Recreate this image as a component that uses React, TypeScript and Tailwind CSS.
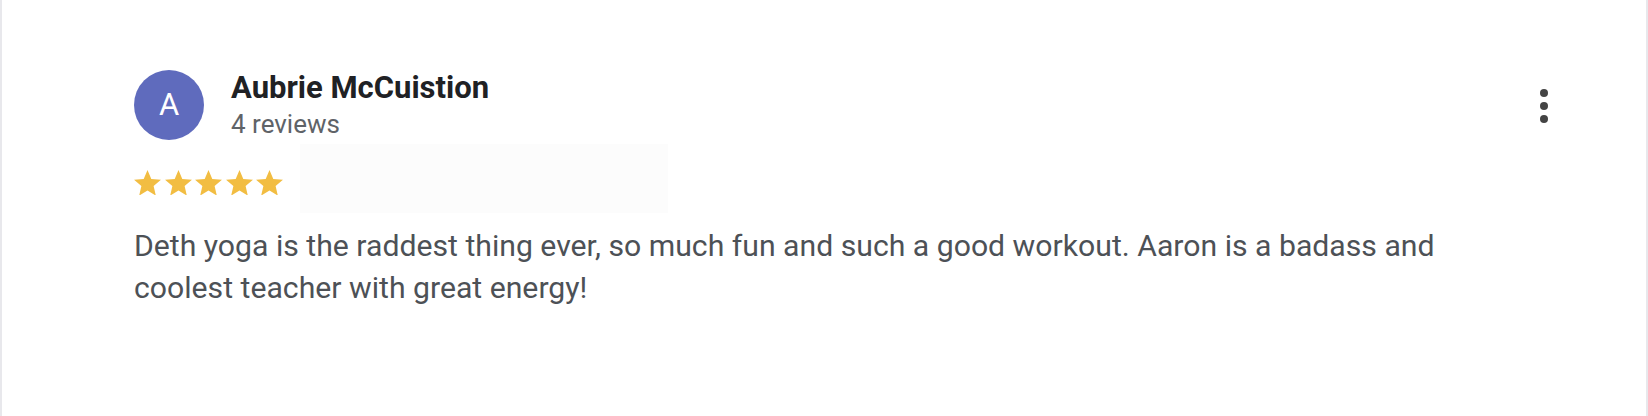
const review = {
  initial: 'A',
  name: 'Aubrie McCuistion',
  reviews: '4 reviews',
  rating: 5,
  text: 'Deth yoga is the raddest thing ever, so much fun and such a good workout. Aaron is a badass and coolest teacher with great energy!'
};

function Star() {
  return (
    <svg viewBox="2 2 20 19" className="h-[25.6px] w-[27px]" fill="#f2bd42">
      <path d="M12 17.27L18.18 21l-1.64-7.03L22 9.24l-7.19-.61L12 2 9.19 8.63 2 9.24l5.46 4.73L5.82 21z" />
    </svg>
  );
}

export default function App() {
  return (
    <div className="h-[416px] w-full border-x-2 border-[#e8e8ec] bg-white font-['Roboto',sans-serif]">
      <div className="flex justify-between pl-[132px] pr-[92px] pt-[70px]">
        <div className="flex flex-col">
          <div className="flex items-start gap-[27px]">
            <div className="flex h-[70px] w-[70px] items-center justify-center rounded-full bg-[#5f6bbd] text-[31px] text-white">
              {review.initial}
            </div>
            <div className="flex flex-col">
              <span className="text-[31px] font-bold leading-[36px] text-[#202124]">{review.name}</span>
              <span className="mt-[3px] text-[26px] leading-[30px] text-[#5f6368]">{review.reviews}</span>
            </div>
          </div>
          <div className="mt-[4px] flex items-center">
            <div className="flex gap-[3.5px] pt-[8px]">
              {Array.from({ length: review.rating }).map((_, i) => (
                <Star key={i} />
              ))}
            </div>
            <div className="ml-[17px] h-[69px] w-[368px] bg-[#fcfcfc]" />
          </div>
          <p className="mt-[12px] max-w-[1340px] text-[30.2px] leading-[42px] text-[#4d5156]">{review.text}</p>
        </div>
        <button className="mt-[19px] flex w-[20px] flex-col items-center gap-[5px] self-start">
          <span className="h-[8px] w-[8px] rounded-full bg-[#444]" />
          <span className="h-[8px] w-[8px] rounded-full bg-[#444]" />
          <span className="h-[8px] w-[8px] rounded-full bg-[#444]" />
        </button>
      </div>
    </div>
  );
}
